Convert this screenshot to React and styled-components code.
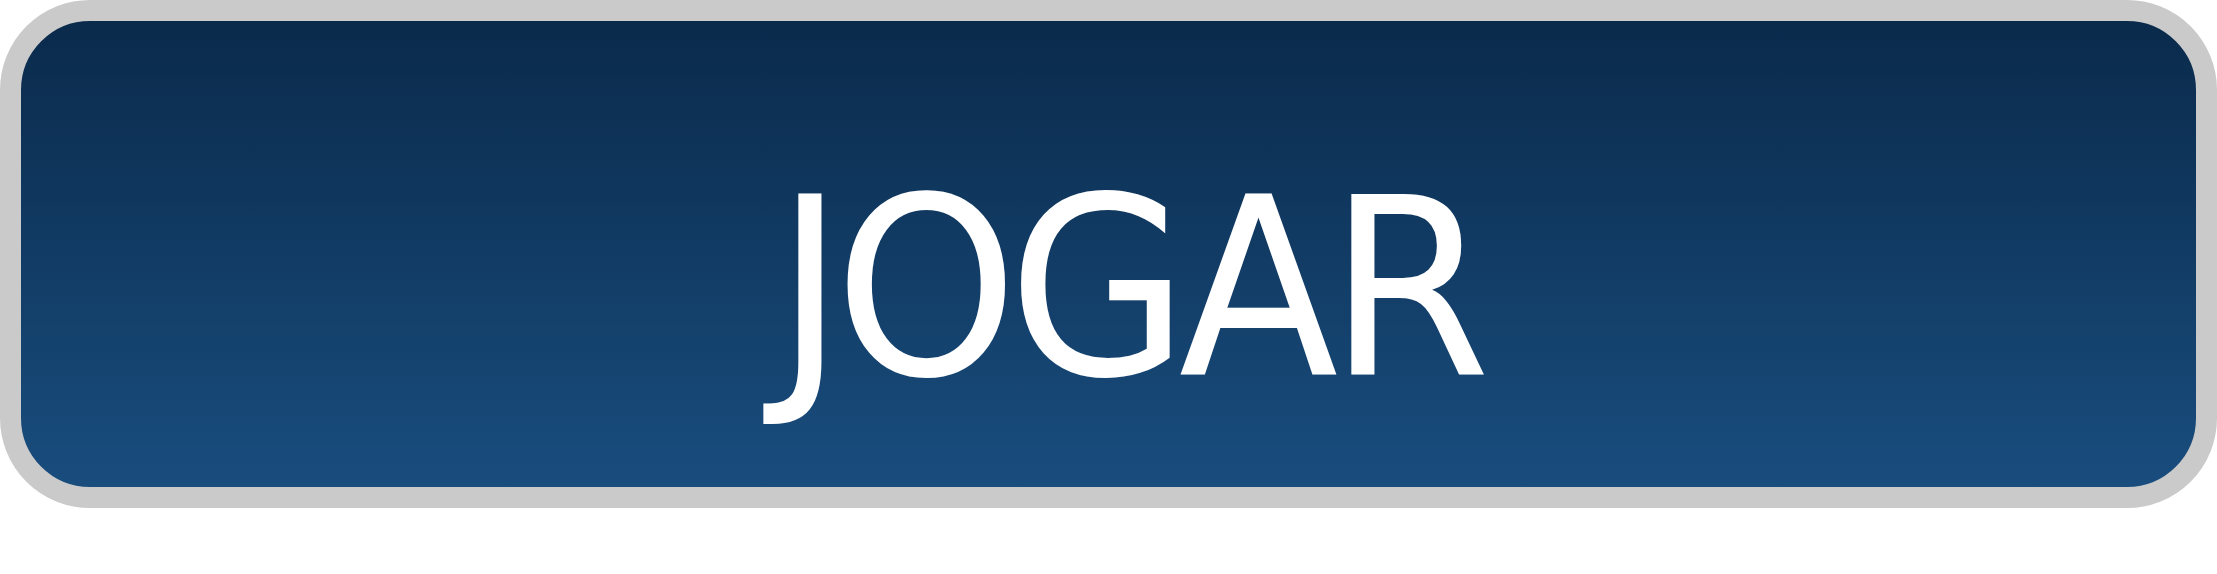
import React from 'react'
import styled, { createGlobalStyle } from 'styled-components'

const GlobalStyle = createGlobalStyle`
  html, body {
    margin: 0;
    padding: 0;
    background: #fff;
  }
`

const PlayButton = styled.button`
  display: flex;
  justify-content: center;
  align-items: flex-start;
  box-sizing: border-box;
  width: 2217px;
  height: 508px;
  margin: 0;
  padding: 143px 0 0;
  border: 21px solid #cacaca;
  border-radius: 90px;
  background: linear-gradient(to bottom, #0a2a4b 0%, #194d7e 100%);
  cursor: pointer;
`

const Label = styled.span`
  display: block;
  font-family: "DejaVu Sans", Verdana, sans-serif;
  font-size: ${(props) => props.size}px;
  line-height: 1;
  letter-spacing: -10.5px;
  color: #fff;
  transform: translateX(${(props) => props.shift}px) scaleX(${(props) => props.stretch});
  transform-origin: center;
  white-space: nowrap;
`

export default function App() {
  return (
    <>
      <GlobalStyle />
      <PlayButton type="button">
        <Label size={248} stretch={0.94} shift={19}>JOGAR</Label>
      </PlayButton>
    </>
  )
}
